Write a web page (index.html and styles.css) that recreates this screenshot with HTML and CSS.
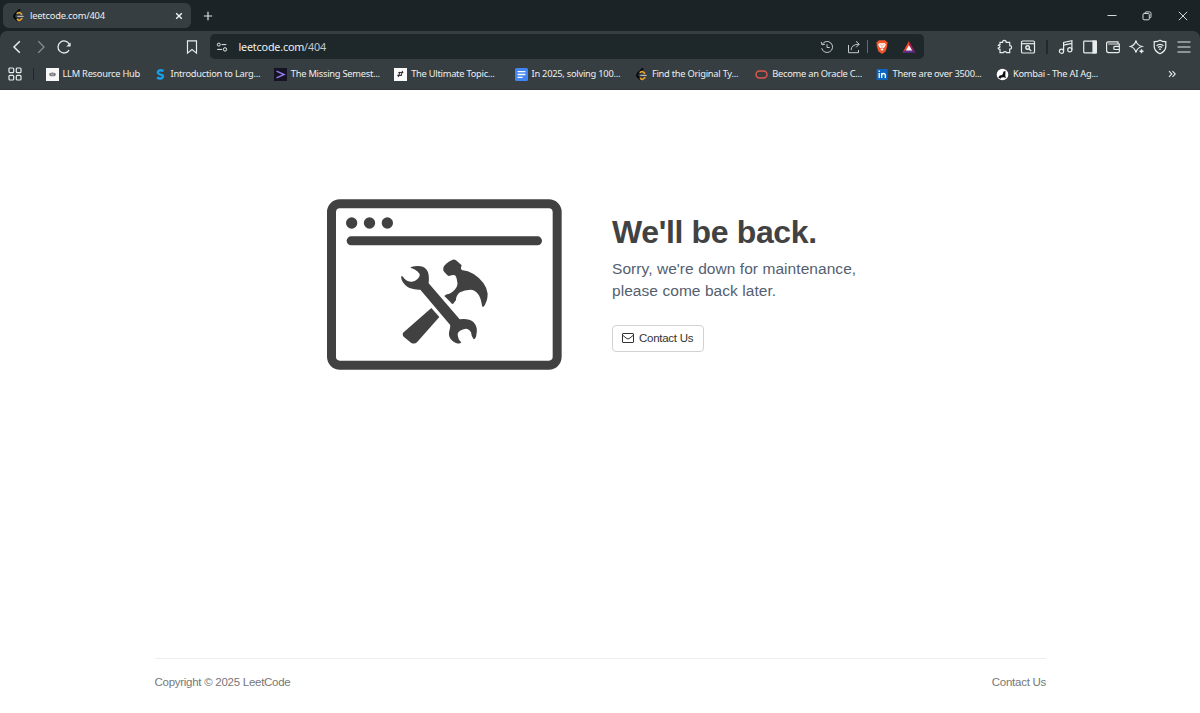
FILE: index.html
```html
<!DOCTYPE html>
<html lang="en">
<head>
<meta charset="utf-8">
<title>leetcode.com/404</title>
<link rel="stylesheet" href="styles.css">
</head>
<body>
<svg class="defs" width="0" height="0" aria-hidden="true">
  <symbol id="leet" viewBox="0 0 14 14">
    <path d="M8 1 3 6q-1.500 1.700 0 3.400l2.700 2.700" fill="none" stroke="#080a0b" stroke-width="2.200" stroke-linecap="round"/>
    <path d="M5.600 4.600q1.800-1.500 3.400-.2l1.300 1.200M5.800 11.200q1.700 1.900 3.400.4l1.400-1.300" fill="none" stroke="#e9a42c" stroke-width="1.700" stroke-linecap="round"/>
    <path d="M6.300 7.900h5.700" stroke="#b9babb" stroke-width="1.500" stroke-linecap="round"/>
  </symbol>
</svg>
<div class="browser">
  <div class="tabs">
    <div class="tab">
      <svg class="fav" width="13" height="13"><use href="#leet"/></svg>
      <span class="tab-title">leetcode.com/404</span>
      <svg class="tab-close" width="8" height="8" viewBox="0 0 8 8"><path d="M1.200 1.200l5.600 5.600M6.800 1.200 1.200 6.800" stroke="#f2f4f4" stroke-width="1.400"/></svg>
    </div>
    <svg class="new-tab" width="10" height="10" viewBox="0 0 10 10"><path d="M5 .8v8.400M.8 5h8.400" stroke="#dfe3e4" stroke-width="1.200"/></svg>
    <div class="window-buttons">
      <svg width="10" height="10" viewBox="0 0 10 10"><path d="M.5 4.500h9"/></svg>
      <svg width="10" height="10" viewBox="0 0 10 10"><rect x="1" y="2.500" width="6.300" height="6.300" rx="1"/><path d="M3 2.300V2q0-1.100 1.100-1.100h3.500Q9 .9 9 2.300v3.500Q9 7 7.600 7"/></svg>
      <svg width="10" height="10" viewBox="0 0 10 10"><path d="M.8.8l8.400 8.400M9.200.8.8 9.200"/></svg>
    </div>
  </div>
  <div class="toolbar">
    <div class="nav">
      <svg viewBox="0 0 16 16"><path d="M10.800 2.200 5 8l5.800 5.800" stroke-width="1.500"/></svg>
      <svg class="dim" viewBox="0 0 16 16"><path d="M5.200 2.200 11 8l-5.800 5.800"/></svg>
      <svg viewBox="0 0 16 16"><path d="M13.100 11.200A6 6 0 1 1 13.400 5.300" stroke-width="1.300"/><path d="M14.600 3.600v4h-4.400z" fill="#e8ecec" stroke="none"/></svg>
    </div>
    <svg class="mark" viewBox="0 0 16 16"><path d="M3.500 1.800h9v12.300L8 10.500l-4.500 3.600z"/></svg>
    <div class="address">
      <svg class="site" width="12" height="12" viewBox="0 0 12 12"><circle cx="2.800" cy="3.600" r="1.500"/><path d="M5.600 3.600h4.700M1.200 8.400H6"/><circle cx="9" cy="8.400" r="1.700"/></svg>
      <span class="url">leetcode.com<span>/404</span></span>
      <div class="address-icons">
        <svg width="14" height="14" viewBox="0 0 14 14"><path d="M2.200 4.400a5.500 5.500 0 1 1-.5 3.800M1.200 1.900l.8 2.900 2.900-.5M7 4.200v3.300h2.700"/></svg>
        <svg width="14" height="14" viewBox="0 0 14 14"><path d="M1.500 5v7.700h10V10M4 10.200q.3-5.800 8-6M9 1.300l3.300 2.900L9.200 7.300"/></svg>
        <i></i>
        <svg class="brave" width="14" height="16" viewBox="0 0 14 16"><path d="M3.800 1.200h6.400l1.200 1.300 1.300 1-.5 2 .1 1.400-1.600 5.400L7 15l-3.700-2.700L1.700 6.900l.1-1.400-.5-2 1.300-1z" fill="#f1562b"/><path d="M4.100 4.200 5.800 4 7 4.500 8.200 4l1.700.2 1 1.600L9.500 8l-.6 1.200L7 8.400l-1.900.8L4.500 8 3.100 5.800zM7 9.300l1.700.9L7 11.700l-1.700-1.500z" fill="#fff"/><path d="M4.700 5.700 6.200 6.100M9.300 5.700 7.800 6.100M7 6.200v1.600" stroke="#f1562b" stroke-width=".7"/></svg>
        <svg class="bat" width="14" height="14" viewBox="0 0 14 14"><path d="M7 1v6L.5 12.800z" fill="#ff4724"/><path d="M7 1l6.500 11.800L7 7z" fill="#9e1f63"/><path d="M.5 12.800 7 8l6.500 4.800z" fill="#662d91"/><path d="M7 5.300l3.200 5.200H3.800z" fill="#fff"/></svg>
      </div>
    </div>
    <div class="extensions">
      <svg viewBox="0 0 16 16"><path d="M3 3.400h2.600Q5.400 1.300 7.300 1.300t1.900 2.100h3.500v3.300q1.900 0 1.900 1.700t-1.900 1.700v3.600H9.600q-.3-1-1.600-1t-1.600 1H3v-3.300q-1.900-.1-1.900-1.200 1.900-.4 1.900-1.600T1.200 6.500Q1.200 5.500 3 5.500z"/></svg>
      <svg viewBox="0 0 16 16"><rect x="1.500" y="2" width="13" height="12" rx="1.300"/><path d="M1.500 4.700h13"/><circle cx="7.600" cy="8.500" r="1.800" stroke-width="1.400"/><path d="m9 10 2.200 2" stroke-width="1.400"/></svg>
      <i></i>
      <svg viewBox="0 0 16 16"><circle cx="3.500" cy="12.200" r="2.100"/><circle cx="11.800" cy="10.700" r="2.100"/><path d="M5.600 12V3.500l8.300-1.800v9M5.600 6.200l8.300-1.800"/></svg>
      <svg viewBox="0 0 16 16"><rect x="1.700" y="2.200" width="12.600" height="11.600" rx=".7"/><path d="M11 2.200h3.300v11.600H11z" fill="#e8ecec"/></svg>
      <svg viewBox="0 0 16 16"><path d="M13 5V2.800H3.300q-1.700 0-1.700 1.600v7.200q0 2 2 2h9.500q1.200 0 1.200-1.200V5H3.300M14.300 7.300H10q-1.300 0-1.300 1.600t1.300 1.600h4.300z"/></svg>
      <svg viewBox="0 0 16 16"><path d="M7 1.500Q7.700 6 13 7.500 7.700 9 7 13.500 6 9 1.500 7.500 6 6 7 1.500z"/><path d="M12.500 10.200v4M10.500 12.200h4" stroke-width="1.400"/></svg>
      <svg viewBox="0 0 16 16"><path d="M8 1.300q2.500 1.600 5.800 1.400v5.200Q13.500 12.300 8 14.800 2.500 12.300 2.200 7.900V2.700Q5.500 2.900 8 1.300z"/><path d="M4.600 6.700Q8 3.900 11.400 6.700M6 8.500q2-1.600 4 0"/><circle cx="8" cy="10.200" r=".9" fill="#e8ecec" stroke="none"/></svg>
      <svg viewBox="0 0 16 16"><path d="M1.500 3h13M1.500 8h13M1.500 13h13"/></svg>
    </div>
  </div>
  <div class="bookmarks">
    <svg class="apps" width="14" height="14" viewBox="0 0 14 14"><rect x="1" y="1" width="4.700" height="4.700" rx="1"/><rect x="8.300" y="1" width="4.700" height="4.700" rx="1"/><rect x="1" y="8.300" width="4.700" height="4.700" rx="1"/><rect x="8.300" y="8.300" width="4.700" height="4.700" rx="1"/></svg>
    <i></i>
    <ul>
      <li class="b1"><svg viewBox="0 0 13 13"><path d="M0 0h13v13H0z" fill="#f7f7f7"/><ellipse cx="6.500" cy="6.400" rx="3.300" ry="1.900" fill="#777"/><path d="M4.500 6h3.800M5 7h3" stroke="#ccc" stroke-width=".5"/></svg><span>LLM Resource Hub</span></li>
      <li class="b2"><svg viewBox="0 0 13 13"><path d="M9.600 2.900Q5 1.300 4 3.600t4.300 3.500q1.600 1.600-.4 3-2.500 1.100-4.900-.6" fill="none" stroke="#189fe7" stroke-width="2.300"/></svg><span>Introduction to Larg...</span></li>
      <li class="b3"><svg viewBox="0 0 13 13"><path d="M0 0h13v13H0z" fill="#151323"/><path d="m2.500 3.200 7.600 3.300-7.600 3.400" fill="none" stroke="#8f7bea" stroke-width="1.400"/></svg><span>The Missing Semest...</span></li>
      <li class="b4"><svg viewBox="0 0 13 13"><path d="M0 0h13v13H0z" fill="#fafafa"/><path d="M4.300 9 6 3.800M7 7.800l1.600-5M4.300 4.500h5M3.300 7.400h4.500" stroke="#333" stroke-width="1.100"/></svg><span>The Ultimate Topic...</span></li>
      <li class="b5"><svg viewBox="0 0 13 13"><rect width="13" height="13" rx="1.500" fill="#4285f4"/><path d="M2.600 3.700h7.800M2.600 6.500h7.800M2.600 9.300h5" stroke="#fff" stroke-width="1.300"/></svg><span>In 2025, solving 100...</span></li>
      <li class="b6"><svg><use href="#leet"/></svg><span>Find the Original Ty...</span></li>
      <li class="b7"><svg viewBox="0 0 13 13"><rect x="1" y="3" width="11" height="7" rx="3.500" fill="none" stroke="#e0564a" stroke-width="1.500"/></svg><span>Become an Oracle C...</span></li>
      <li class="b8"><svg viewBox="0 0 13 13"><rect x=".6" y="1" width="11" height="11" fill="#0a66c2"/><path d="M3.200 5v5M3.200 2.600V4M5.700 10V5M5.700 7q.3-1.500 1.800-1.500T9.300 7v3" stroke="#fff" stroke-width="1.300" fill="none"/></svg><span>There are over 3500...</span></li>
      <li class="b9"><svg viewBox="0 0 13 13"><circle cx="6.500" cy="6.500" r="5.800" fill="#fff"/><path d="M2.300 9.400q1-2.500 4-2.400l1.300-3.500L9.500 3 9.300 8l.7 2.300-2-1-2.700.2-.7 1.300z" fill="#111"/></svg><span>Kombai - The AI Ag...</span></li>
    </ul>
    <svg class="more" width="8" height="8" viewBox="0 0 8 8"><path d="m1 1.200 2.800 2.800L1 6.800M4.500 1.200 7.300 4 4.500 6.800"/></svg>
  </div>
</div>
<main>
  <svg class="art" viewBox="51 27 705 513" fill="#414141">
    <rect x="64.500" y="41.500" width="677" height="484" rx="25" fill="none" stroke="#414141" stroke-width="27"/>
    <circle cx="125" cy="99" r="17"/><circle cx="178.500" cy="99" r="17"/><circle cx="232" cy="99" r="17"/>
    <rect x="110" y="139" width="586" height="27" rx="13.500"/>
    <path d="M303 231C320 226 341 226 350 239Q359 250 356 280L449 388Q476 384 491 397Q505 412 499 436Q497 447 491 448Q484 440 483 427Q475 414 464 417Q447 420 443 431Q443 447 454 457Q450 463 438 459C421 451 414 439 418 423Q422 408 420 404L331 299C311 300 292 294 283 282Q272 270 274 258Q278 257 284 267Q294 277 306 275Q324 271 329 257Q330 243 302 233Z"/>
    <path d="M400 233Q405 219 428 209Q433 207 438 211L455 226Q451 233 455 240Q474 242 491 252Q529 277 533 311Q533 336 519 352Q516 351 515 341C512 315 497 299 482 299Q463 299 450 307Q438 316 438 330L429 342Q424 342 421 336L403 318Q407 312 418 311C434 305 445 288 442 277Q440 258 433 255Q423 255 417 258Q413 258 400 242Z"/>
    <path d="M364 354L388 381L321 457Q313 464 303 458L281 440Q275 433 281 427Z"/>
  </svg>
  <section>
    <h1>We'll be back.</h1>
    <p>Sorry, we're down for maintenance,<br>please come back later.</p>
    <a class="button"><svg width="12" height="10" viewBox="0 0 12 10"><rect x=".5" y=".5" width="11" height="9" rx=".5"/><path d="M.8 2.300Q4.800 6 6 6t5.200-3.700"/></svg><span>Contact Us</span></a>
  </section>
</main>
<footer><span>Copyright © 2025 LeetCode</span><span>Contact Us</span></footer>
</body>
</html>
```

FILE: styles.css
```css
* { box-sizing: border-box; }
body { margin: 0; width: 1200px; height: 713px; overflow: hidden; display: flex; flex-direction: column; background: #fff; font-family: "Liberation Sans", Arial, sans-serif; }
svg { display: block; flex: none; }
.defs { position: absolute; }
.browser { height: 90px; flex: none; background: #1b2327; color: #edf0f0; font-family: "Noto Sans", "Open Sans", sans-serif; border-bottom: 1px solid #30343a; }
.tabs { height: 31px; display: flex; align-items: center; padding-left: 3px; }
.tab { width: 188px; height: 25px; border-radius: 6px; background: #363e41; display: flex; align-items: center; padding: 0 8px 0 9px; }
.tab-title { margin-left: 5px; font-size: 9.3px; letter-spacing: -.2px; white-space: nowrap; }
.tab-close { margin-left: auto; }
.new-tab { margin-left: 12px; }
.window-buttons { margin-left: auto; display: flex; gap: 25.500px; padding-right: 12.500px; fill: none; stroke: #d5d9da; stroke-width: 1; }
.toolbar { height: 31px; background: #363e41; border-radius: 7px 7px 0 0; display: flex; align-items: center; padding-left: 9px; fill: none; stroke: #e8ecec; stroke-width: 1.200; }
.toolbar i { display: block; }
.nav { display: flex; gap: 7.500px; }
.nav svg, .mark, .extensions svg { width: 16px; height: 16px; }
.dim { opacity: .5; }
.mark { margin-left: 112px; }
.address { width: 714px; height: 25px; margin-left: 9.500px; border-radius: 5px; background: #1e272a; display: flex; align-items: center; padding: 0 8px 0 6px; }
.site { margin-right: 11px; stroke-width: 1; }
.url { font-size: 10.800px; letter-spacing: -.2px; white-space: nowrap; }
.url span { color: #c2c8ca; }
.address-icons { margin-left: auto; display: flex; align-items: center; stroke: #c5cacc; stroke-width: 1; }
.address-icons svg + svg { margin-left: 13px; }
.address-icons i { width: 1px; height: 13px; background: #616a6e; margin: 0 7px 0 6px; }
.address-icons .brave, .address-icons .bat { stroke: none; }
.extensions { margin-left: 73px; display: flex; align-items: center; gap: 7.500px; }
.extensions i { width: 2px; height: 14px; background: #22292c; margin: 0 2.500px; }
.bookmarks { height: 27px; background: #363e41; display: flex; align-items: center; padding: 0 24px 3px 8px; }
.apps { fill: none; stroke: #e8ecec; stroke-width: 1.200; }
.bookmarks > i { width: 1px; height: 12px; margin-left: 11px; background: #20272a; }
ul { list-style: none; display: flex; margin: 0 0 0 11.500px; padding: 0; }
li { width: 120.350px; display: flex; align-items: center; font-size: 9.300px; letter-spacing: -.25px; line-height: 14px; white-space: nowrap; }
li svg { width: 13px; height: 13px; margin-right: 4px; }
.b1 { width: 108px; }
.more { margin-left: auto; fill: none; stroke: #e8ecec; stroke-width: 1.100; }
main { height: 569px; flex: none; display: flex; align-items: flex-start; padding: 109px 0 0 327px; }
.art { width: 235px; height: 171px; }
section { margin: 15px 0 0 50px; }
h1 { margin: 0; font-size: 32px; line-height: 37px; letter-spacing: -.36px; color: #424242; }
p { margin: 7px 0 0; font-size: 15.500px; letter-spacing: .06px; line-height: 22px; color: #546070; white-space: nowrap; }
.button { width: 92px; height: 27px; margin-top: 23px; border: 1px solid #d2d2d2; border-radius: 4px; display: flex; align-items: center; padding: 0 0 1px 9px; gap: 5px; color: #333; font-size: 11.500px; letter-spacing: -.27px; white-space: nowrap; }
.button svg { fill: none; stroke: #333; stroke-width: 1; }
footer { width: 891.500px; margin: -1px 0 0 154.500px; border-top: 1px solid #eee; display: flex; justify-content: space-between; padding-top: 16px; font-size: 11.500px; letter-spacing: -.27px; line-height: 15px; color: #777; }
```
